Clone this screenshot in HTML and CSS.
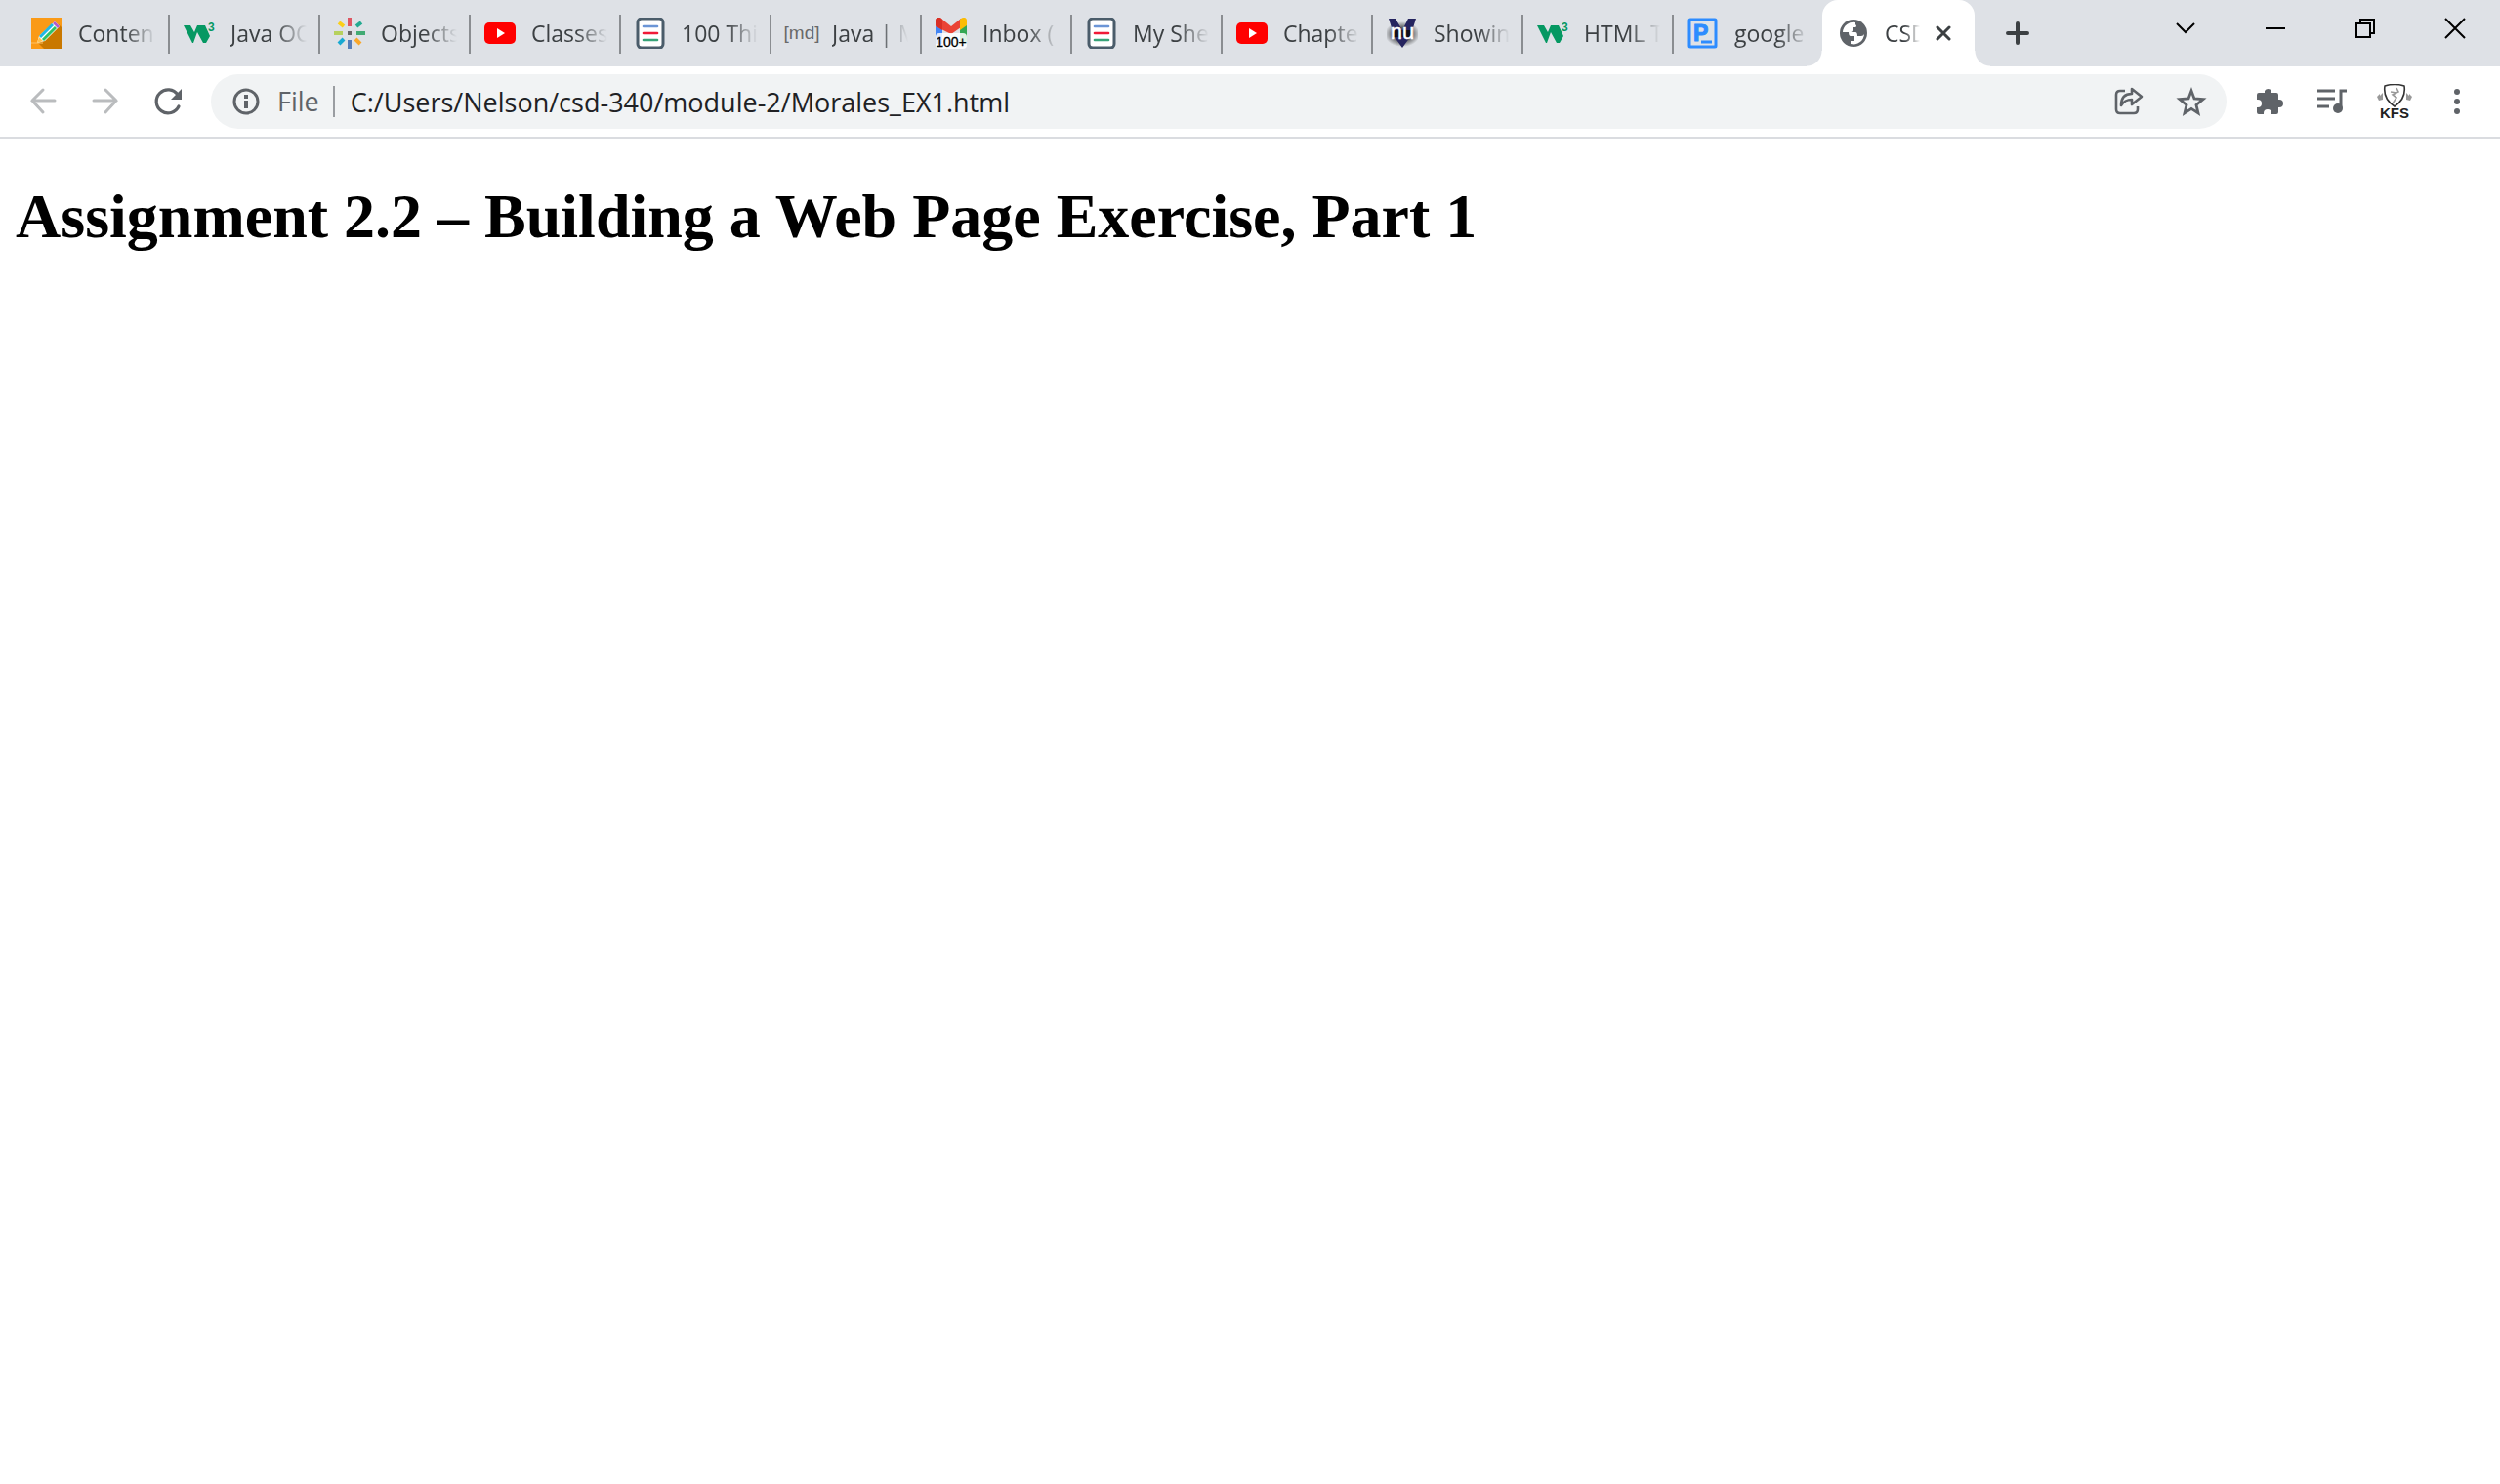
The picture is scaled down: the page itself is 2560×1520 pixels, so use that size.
FILE: index.html
```html
<!DOCTYPE html>
<html lang="en">
<head>
<meta charset="utf-8">
<title>CSD 340</title>
<link rel="stylesheet" href="styles.css">
</head>
<body>
<svg class="defs" aria-hidden="true">
  <radialGradient id="glow"><stop offset=".5" stop-color="#000"/><stop offset="1" stop-color="#000" stop-opacity="0"/></radialGradient>
  <symbol id="w3" viewBox="0 0 32 32"><path d="M0 8h7l4 7 3-7h8l5 11-4 7h-3l-6-11-4 11h-1z" fill="#059862"/><text x="25" y="14" font-size="12" font-weight="700" fill="#059862">3</text></symbol>
  <symbol id="youtube" viewBox="0 0 32 32"><rect y="5" width="32" height="22" rx="5" fill="#f00"/><path d="M13 11v10l8-5z" fill="#fff"/></symbol>
  <symbol id="doc" viewBox="0 0 32 32"><rect x="3" y="1" width="26" height="30" rx="4" fill="#fff" stroke="#4a5c6a" stroke-width="3"/><g stroke-width="2.6" stroke-linecap="round"><path d="M9 9h14" stroke="#6b95d6"/><path d="M9 16h14" stroke="#f01a37"/><path d="M9 23h14" stroke="#36a378"/></g></symbol>
</svg>
<header class="browser">
  <div class="strip">
    <nav class="tabs" aria-label="Tabs">
      <button class="tab first"><svg class="fav" viewBox="0 0 32 32"><path d="M0 0h32v32H0z" fill="#fa9a17"/><path d="M28 7l4 4v21H13l-6-6z" fill="#c97800"/><path d="M0 26h12" stroke="#ffc266"/><path d="M6 26l2-7L24 4l5 5-15 15z" fill="#fff"/><path d="M9 20L22 7" stroke="#1fb8e8" stroke-width="3"/><path d="M12 23L25 10" stroke="#2fc268" stroke-width="3"/><path d="M22 6l2-2 5 5-2 2z" fill="#b45ccc"/><path d="M6 26l2-6 4 4z" fill="#ffc04c"/></svg><span class="name">Conten</span></button>
      <button class="tab"><svg class="fav"><use href="#w3"/></svg><span class="name">Java OO</span></button>
      <button class="tab"><svg class="fav" viewBox="0 0 32 32"><g stroke-width="4"><path d="M16 0v9" stroke="#de5662"/><path d="M23 9l5-4" stroke="#23aa90"/><path d="M23 16h9" stroke="#42ab74"/><path d="M22 22l5 5" stroke="#f9a72b"/><path d="M16 23v9" stroke="#567cb8"/><path d="M10 22l-5 5" stroke="#18a9d2"/><path d="M0 16h9" stroke="#b6d15e"/><path d="M10 9L5 5" stroke="#fbcf18"/></g><path d="M14 14h4v4h-4z" fill="#666"/></svg><span class="name">Objects</span></button>
      <button class="tab"><svg class="fav"><use href="#youtube"/></svg><span class="name">Classes</span></button>
      <button class="tab"><svg class="fav"><use href="#doc"/></svg><span class="name">100 Thi</span></button>
      <button class="tab"><svg class="fav md" viewBox="0 0 32 32"><text x="17" y="22" text-anchor="middle" font-size="19" fill="#696969">[md]</text></svg><span class="name">Java | M</span></button>
      <button class="tab"><svg class="fav" viewBox="0 0 32 32"><path d="M0 5h7v22H0z" fill="#4285f4"/><path d="M25 5h7v22h-7z" fill="#34a853"/><path d="M0 9V3c0-3 4-4 6-2l10 8 10-8v9L16 17z" fill="#ea4335"/><path d="M0 8V3c0-3 4-4 6-2l1 1v11z" fill="#d93025"/><path d="M25 2l1-1c3-2 6-1 6 2v5l-7 5z" fill="#fbbc04"/><rect y="16" width="32" height="16" rx="4" fill="#fff" fill-opacity=".85"/><text x="16" y="30" text-anchor="middle" font-size="14" fill="#000" stroke="#000" stroke-width=".3">100+</text></svg><span class="name">Inbox (</span></button>
      <button class="tab"><svg class="fav"><use href="#doc"/></svg><span class="name">My She</span></button>
      <button class="tab"><svg class="fav"><use href="#youtube"/></svg><span class="name">Chapte</span></button>
      <button class="tab"><svg class="fav" viewBox="0 0 32 32"><ellipse cx="16" cy="17" rx="18" ry="13" fill="url(#glow)" opacity=".6"/><path d="M2 1h7l7 12 6-12h8l-6 19-8 11-8-11z" fill="#25245f"/><path d="M5 13h22v7H5z" fill="#101018"/><text x="16" y="22" text-anchor="middle" font-size="22" fill="#fff" stroke="#fff" stroke-width=".5">nu</text></svg><span class="name">Showin</span></button>
      <button class="tab"><svg class="fav"><use href="#w3"/></svg><span class="name">HTML T</span></button>
      <button class="tab last"><svg class="fav" viewBox="0 0 32 32"><rect x="2" y="2" width="27" height="28" rx="1" fill="#dee1e6" stroke="#2d8cff" stroke-width="3"/><text x="6" y="24" font-size="23" font-weight="700" fill="#2d8cff" stroke="#2d8cff">P</text><path d="M14 25h11" stroke="#2d8cff" stroke-width="3"/></svg><span class="name">google</span></button>
      <div class="tab active"><svg class="fav" viewBox="0 0 32 32"><circle cx="16" cy="16" r="14" fill="#5f6368"/><path d="M5 15A11 11 0 0 1 18 5v2q2 2 0 3h-3v3q0 2-3 2h6q2 0 2 4h4q2 0 3-2A11 11 0 0 1 13 27v-3h4v-5h-4q-2 0-2-4z" fill="#fff"/></svg><span class="name">CSD</span><button class="close" aria-label="Close tab"><svg viewBox="0 0 16 16"><path d="M2 2l12 12M14 2L2 14" stroke="#3c4043" stroke-width="3" stroke-linecap="round"/></svg></button></div>
    </nav>
    <button class="newtab" aria-label="New tab"><svg viewBox="0 0 24 24"><path d="M12 2v20M2 12h20" stroke="#3c4043" stroke-width="4" stroke-linecap="round"/></svg></button>
    <div class="window">
      <button aria-label="Search tabs"><svg viewBox="0 0 20 20"><path d="M1 5l9 9 9-9"/></svg></button>
      <button aria-label="Minimize"><svg viewBox="0 0 20 20"><path d="M0 10h20"/></svg></button>
      <button aria-label="Restore"><svg viewBox="0 0 20 20"><path d="M1 5h14v14H1zM5 5V1h14v14h-4"/></svg></button>
      <button aria-label="Close"><svg viewBox="0 0 20 20"><path d="M0 0l20 20M20 0L0 20"/></svg></button>
    </div>
  </div>
  <div class="toolbar">
    <button class="tool" aria-label="Back"><svg viewBox="0 0 32 32"><path d="M28 15H5M16 4L5 15l11 12" fill="none" stroke="#babcbe" stroke-width="3" stroke-linecap="round"/></svg></button>
    <button class="tool" aria-label="Forward"><svg viewBox="0 0 32 32"><path d="M4 15h23M16 4l11 11-11 12" fill="none" stroke="#babcbe" stroke-width="3" stroke-linecap="round"/></svg></button>
    <button class="tool" aria-label="Reload"><svg viewBox="0 0 32 32"><path d="M26 9a12 12 0 1 0 1 12" fill="none" stroke="#5f6368" stroke-width="3.2" stroke-linecap="round"/><path d="M30 3v11H19z" fill="#5f6368"/></svg></button>
    <div class="omnibox">
      <svg class="info" viewBox="0 0 32 32"><circle cx="16" cy="16" r="12" fill="none" stroke="#5f6368" stroke-width="3"/><path d="M14 9h4v4h-4zM14 15h4v8h-4z" fill="#5f6368"/></svg>
      <label class="scheme" for="url">File</label>
      <input class="url" id="url" type="text" value="C:/Users/Nelson/csd-340/module-2/Morales_EX1.html">
      <button class="tool" aria-label="Share"><svg viewBox="0 0 32 32"><g fill="none" stroke="#5f6368" stroke-width="2.6" stroke-linejoin="round"><path d="M12 5H7q-4 0-4 4v15q0 4 4 4h14q4 0 4-4v-3"/><path d="M19 3l10 8-10 8v-5c-5 0-8 1-11 6 0-8 4-12 11-12z"/></g></svg></button>
      <button class="tool" aria-label="Bookmark"><svg viewBox="0 0 32 32"><path d="M16 5l3 8 9 .7-7 5.8 2 8.500-7-4.600-7 4.600 2-8.500-7-5.800 9-.7z" fill="none" stroke="#5f6368" stroke-width="2.800"/></svg></button>
    </div>
    <div class="actions">
      <button class="tool" aria-label="Extensions"><svg viewBox="0 0 32 32"><path d="M26 14h-1V9q0-2-2-2h-5V5a4 4 0 0 0-7 0v2H5Q3 7 3 9v5h1a4 4 0 0 1 0 8H3v5q0 2 2 2h5v-1a4 4 0 0 1 8 0v1h5q2 0 2-2v-5h1a4 4 0 0 0 0-8z" fill="#5f6368"/></svg></button>
      <button class="tool" aria-label="Media controls"><svg viewBox="0 0 32 32"><path d="M1 5h18M1 13h18M1 21h12M25 23V5h6" fill="none" stroke="#5f6368" stroke-width="3"/><circle cx="22" cy="23" r="5" fill="#5f6368"/></svg></button>
      <button class="tool" aria-label="KFS"><svg class="kfs" viewBox="0 0 36 36"><path d="M8 2q10-3 20 0 2 13-10 21Q6 15 8 2z" fill="#fff" stroke="#333" stroke-width="1.600"/><path d="M20 4l2 4-6 3 4 3-4 6M14 8l6 1" fill="none" stroke="#999" stroke-width="1.600"/><path d="M0 13l3-3v2l3-3v7l-4 1zM36 13l-3-3v2l-3-3v7l4 1z" fill="#999"/><text x="18" y="35" text-anchor="middle" font-size="15" font-weight="700" fill="#222">KFS</text></svg></button>
      <button class="tool" aria-label="Menu"><svg viewBox="0 0 32 32"><g fill="#5f6368"><circle cx="16" cy="6" r="3"/><circle cx="16" cy="16" r="3"/><circle cx="16" cy="26" r="3"/></g></svg></button>
    </div>
  </div>
</header>
<main class="page">
  <h1>Assignment 2.2 – Building a Web Page Exercise, Part 1</h1>
</main>
</body>
</html>
```

FILE: styles.css
```css
* { box-sizing: border-box; }
body { margin: 0; background: #fff; font-family: "Open Sans", "Noto Sans", sans-serif; }
button { border: 0; padding: 0; background: none; color: inherit; font: inherit; display: flex; align-items: center; justify-content: center; flex: none; }
svg { display: block; flex: none; }
svg text { font-family: "Liberation Sans", sans-serif; }
.md { overflow: visible; }
.defs { position: absolute; width: 0; height: 0; }

.strip { display: flex; height: 68px; padding-left: 20px; background: #dee1e6; }
.tabs { display: flex; min-width: 0; }
.tab { position: relative; display: flex; align-items: center; justify-content: flex-start; gap: 16px; width: 154px; height: 68px; padding: 0 14px; color: #3c4043; font-size: 23px; line-height: 32px; }
.tab::after { content: ""; position: absolute; right: 0; top: 15px; width: 2px; height: 40px; background: #8a8d91; }
.first { padding-left: 12px; }
.last { width: 152px; }
.last::after { display: none; }
.fav { width: 32px; height: 32px; }
.name { flex: 1; min-width: 0; overflow: hidden; white-space: nowrap; text-align: left; mask-image: linear-gradient(to left, transparent, #000 32px); }
.active { width: 156px; padding: 0 24px 0 16px; background: #fff; border-radius: 16px 16px 0 0; }
.active .name { mask-image: linear-gradient(to left, transparent, #000 16px); }
.active::before, .active::after { content: ""; position: absolute; top: auto; bottom: 0; width: 16px; height: 16px; }
.active::before { left: -16px; background: radial-gradient(circle at 0 0, transparent 15px, #fff 16px); }
.active::after { right: -16px; background: radial-gradient(circle at 100% 0, transparent 15px, #fff 16px); }
.close, .close svg { width: 16px; height: 16px; }
.newtab { width: 56px; margin-left: 16px; }
.newtab svg { width: 24px; height: 24px; }
.window { display: flex; align-items: flex-start; margin-left: auto; }
.window button { width: 92px; height: 58px; }
.window svg { width: 20px; height: 20px; overflow: visible; fill: none; stroke: #000; stroke-width: 2; }

.toolbar { display: flex; align-items: center; gap: 16px; height: 74px; padding: 0 20px; border-bottom: 2px solid #dadce0; }
.tool { width: 48px; height: 48px; }
.tool svg { width: 32px; height: 32px; }
.tool .kfs { width: 36px; height: 36px; }
.omnibox { display: flex; align-items: center; flex: 1; min-width: 0; height: 56px; margin-left: 4px; padding: 0 12px 0 20px; border-radius: 28px; background: #f1f3f4; font-size: 27px; gap: 16px; }
.info { width: 32px; height: 32px; }
.scheme { padding-right: 14px; border-right: 2px solid #9a9da1; color: #5f6368; line-height: 32px; }
.url { flex: 1; min-width: 0; height: 46px; border: 0; padding: 0; background: none; color: #202124; font: inherit; outline: 0; }
.actions { display: flex; gap: 16px; margin-left: 4px; }

.page { display: flow-root; padding: 0 16px; font-family: "Liberation Serif", serif; color: #000; }
.page h1 { margin: 43px 0; font-size: 64px; line-height: 74px; }
```
